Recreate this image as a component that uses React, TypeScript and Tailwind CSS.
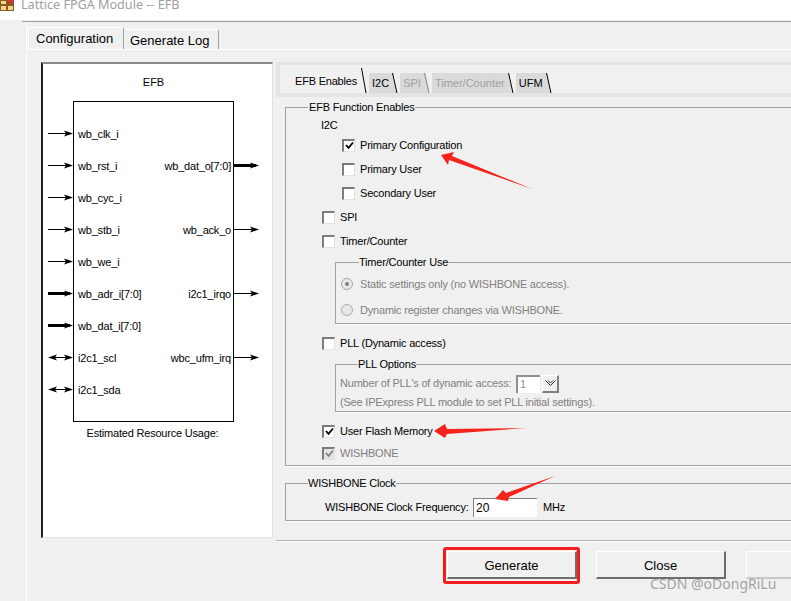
import type { ReactNode } from 'react';

const LEFT_PORTS = ['wb_clk_i', 'wb_rst_i', 'wb_cyc_i', 'wb_stb_i', 'wb_we_i', 'wb_adr_i[7:0]', 'wb_dat_i[7:0]', 'i2c1_scl', 'i2c1_sda'];
const LEFT_KINDS: ArrowKind[] = ['thin', 'thin', 'thin', 'thin', 'thin', 'thick', 'thick', 'both', 'both'];
const RIGHT_PORTS = ['', 'wb_dat_o[7:0]', '', 'wb_ack_o', '', 'i2c1_irqo', '', 'wbc_ufm_irq', ''];
const RIGHT_KINDS: (ArrowKind | null)[] = [null, 'thick', null, 'thin', null, 'thin', null, 'thin', null];

type ArrowKind = 'thin' | 'thick' | 'both';

function Arrow({ kind }: { kind: ArrowKind | null }) {
  return (
    <div className="h-[32px] flex items-center">
      {kind && (
        <svg width="25" height="9" viewBox="0 0 25 9" className="block">
          <line x1={kind === 'both' ? 2 : 0} y1="4.5" x2="22" y2="4.5" stroke="#000" strokeWidth={kind === 'thick' ? 3 : 1} />
          <path d="M16 1.5 L25 4.5 L16 7.5 L18 4.5 Z" fill="#000" />
          {kind === 'both' && <path d="M9 1.5 L0 4.5 L9 7.5 L7 4.5 Z" fill="#000" />}
        </svg>
      )}
    </div>
  );
}

function CheckBox({ checked, disabled }: { checked?: boolean; disabled?: boolean }) {
  return (
    <span
      className={`w-[13px] h-[13px] shrink-0 border-t-2 border-l-2 border-r border-b border-t-[#7c7c7c] border-l-[#7c7c7c] border-r-[#e2e2e2] border-b-[#e2e2e2] flex items-center justify-center ${
        disabled ? 'bg-[#e4e4e4]' : 'bg-white'
      }`}
    >
      {checked && (
        <svg width="9" height="9" viewBox="0 0 9 9" className="block">
          <path d="M1 4 L3.5 6.8 L8 1.5" fill="none" stroke={disabled ? '#808080' : '#000'} strokeWidth="1.8" />
        </svg>
      )}
    </span>
  );
}

function CheckRow({ label, indent, checked, disabled, height = 24 }: { label: string; indent: string; checked?: boolean; disabled?: boolean; height?: number }) {
  return (
    <div className={`flex items-center gap-[5px] ${indent} ${height === 24 ? 'h-[24px]' : 'h-[20px]'} ${disabled ? 'text-[#7f7f7f]' : ''}`}>
      <CheckBox checked={checked} disabled={disabled} />
      <span>{label}</span>
    </div>
  );
}

function Radio({ label, selected }: { label: string; selected?: boolean }) {
  return (
    <div className="h-[26px] flex items-center gap-[7px] pl-[5px] text-[#808080]">
      <svg width="12" height="12" viewBox="0 0 12 12" className="block">
        <circle cx="6" cy="6" r="5.5" fill="#e8e8e8" stroke="#a8a8a8" />
        {selected && <circle cx="6" cy="6" r="2" fill="#808080" />}
      </svg>
      <span>{label}</span>
    </div>
  );
}

function Group({ title, className, legendClass, children }: { title: string; className: string; legendClass: string; children: ReactNode }) {
  return (
    <fieldset className={`border border-r-0 border-[#a0a0a0] shadow-[0_1px_0_#fff] ${className}`}>
      <legend className={`h-[14px] leading-[14px] ${legendClass}`}>{title}</legend>
      {children}
    </fieldset>
  );
}

function SubTab({ label, active, muted, edge = '#000' }: { label: string; active?: boolean; muted?: boolean; edge?: string }) {
  return (
    <div className="flex items-end h-[25px]">
      <div className={`${active ? 'h-[25px] pr-[4px]' : 'h-[20px] bg-[#dadada] pl-[3px] pr-[3px] tracking-normal'} flex items-center pt-[1px] ${muted ? 'text-[#a0a0a0]' : ''}`}>
        {label}
      </div>
      <svg width="8" height="25" viewBox="0 0 8 25" className="block shrink-0">
        {!active && <polygon points="0,5 1,5 5,25 0,25" fill="#dadada" />}
        <line x1="0.5" y1={active ? 0 : 5} x2="5" y2="25" stroke={edge} />
      </svg>
    </div>
  );
}

function DlgButton({ label, disabled }: { label: string; disabled?: boolean }) {
  return (
    <button
      className={`w-[130px] h-[28px] pt-[1px] text-[13px] bg-[#f0f0f0] border-t border-l border-white border-r-2 border-b-2 ${
        disabled ? 'border-r-[#c8c8c8] border-b-[#c8c8c8]' : 'border-r-[#6e6e6e] border-b-[#6e6e6e]'
      }`}
    >
      {label}
    </button>
  );
}

export default function App() {
  return (
    <div className="relative w-[791px] h-[601px] overflow-hidden bg-[#f0f0f0] text-black text-[11px] tracking-[-0.2px] leading-none font-['Liberation_Sans',sans-serif]">
      {/* Title bar, cropped at the top of the shot */}
      <div className="h-[20px] bg-white flex items-start gap-[7px] overflow-hidden">
        <svg width="14" height="11" viewBox="0 0 14 11" className="block shrink-0">
          <rect x="0" y="-1" width="14" height="12" fill="#8a5a1e" />
          <rect x="1" y="1" width="5" height="3" fill="#f4d78a" />
          <rect x="1" y="6" width="5" height="4" fill="#f4d78a" />
          <rect x="8" y="6" width="5" height="4" fill="#f4d78a" />
          <rect x="8" y="0" width="6" height="3" fill="#c8383a" />
        </svg>
        <span className="-mt-[3px] text-[12.6px] tracking-normal leading-[16px] text-[#a0a0a0] font-['Noto_Sans',sans-serif]">Lattice FPGA Module -- EFB</span>
      </div>

      {/* Outer tab page */}
      <div className="ml-[22px] mt-[1px] border-t border-[#a0a0a0] h-[580px]">
        <div className="ml-[4px] h-full border-l border-white">
          <div className="h-[28px] flex items-end text-[13px] tracking-normal pl-[1px] border-b border-white pt-[6px]">
            <div className="h-[22px] w-[96px] border border-b-0 border-white border-r-[#a0a0a0] rounded-t-[2px] flex items-center pl-[7px]">Configuration</div>
            <div className="h-[20px] w-[95px] border-t border-r border-white border-r-[#a0a0a0] rounded-t-[2px] flex items-center pl-[6px] pt-[1px]">Generate Log</div>
          </div>

          <div className="flex pt-[12px]">
            {/* Block diagram */}
            <div className="ml-[14px] w-[232px] h-[476px] shrink-0 bg-white border-t-2 border-l-2 border-t-[#8a8a8a] border-l-[#202020] border-r border-b border-r-[#e2e2e2] border-b-[#e2e2e2]">
              <div className="h-[37px] pt-[12px] pr-[8px] text-center tracking-normal leading-[13px]">EFB</div>
              <div className="flex pl-[5px]">
                <div className="w-[25px] pt-[16px]">
                  {LEFT_KINDS.map((kind, i) => (
                    <Arrow key={i} kind={kind} />
                  ))}
                </div>
                <div className="w-[161px] h-[321px] border border-black py-[16px] flex justify-between pl-[4px] pr-[2px]">
                  <div>
                    {LEFT_PORTS.map((name) => (
                      <div key={name} className="h-[32px] flex items-center">
                        {name}
                      </div>
                    ))}
                  </div>
                  <div className="text-right">
                    {RIGHT_PORTS.map((name, i) => (
                      <div key={i} className="h-[32px] flex items-center justify-end">
                        {name}
                      </div>
                    ))}
                  </div>
                </div>
                <div className="w-[25px] pt-[16px]">
                  {RIGHT_KINDS.map((kind, i) => (
                    <Arrow key={i} kind={kind} />
                  ))}
                </div>
              </div>
              <div className="pt-[6px] pr-[10px] text-center">Estimated Resource Usage:</div>
            </div>

            {/* Settings */}
            <div className="ml-[3px] flex-1 min-w-0">
              <div className="h-[35px] bg-[#e4e4e4] pl-[4px] pt-[3px]">
                <div className="h-[28px] bg-[#f0f0f0] pl-[15px] flex items-end">
                  <SubTab label="EFB Enables" active />
                  <SubTab label="I2C" />
                  <SubTab label="SPI" muted edge="#808080" />
                  <SubTab label="Timer/Counter" muted />
                  <SubTab label="UFM" />
                </div>
              </div>

              <div className="pl-[9px] pt-[3px] w-[600px]">
                <Group title="EFB Function Enables" className="h-[366px]" legendClass="ml-[22px] px-[1px]">
                  <div className="pt-[4px] pl-[35px] h-[19px] leading-[14px]">I2C</div>
                  <CheckRow label="Primary Configuration" indent="pl-[56px]" checked />
                  <CheckRow label="Primary User" indent="pl-[56px]" />
                  <CheckRow label="Secondary User" indent="pl-[56px]" />
                  <CheckRow label="SPI" indent="pl-[36px]" />
                  <CheckRow label="Timer/Counter" indent="pl-[36px]" />
                  <div className="pl-[49px] mt-[2px]">
                    <Group title="Timer/Counter Use" className="h-[69px]" legendClass="ml-[23px]">
                      <div className="pt-[2px]">
                        <Radio label="Static settings only (no WISHBONE access)." selected />
                        <Radio label="Dynamic register changes via WISHBONE." />
                      </div>
                    </Group>
                  </div>
                  <div className="mt-[7px]">
                    <CheckRow label="PLL (Dynamic access)" indent="pl-[36px]" />
                  </div>
                  <div className="pl-[49px] mt-[2px]">
                    <Group title="PLL Options" className="h-[55px]" legendClass="ml-[22px]">
                      <div className="pt-[1px] pl-[4px]">
                        <div className="h-[23px] flex items-center text-[#808080]">
                          <span className="w-[176px]">Number of PLL's of dynamic access:</span>
                          <span className="w-[24px] h-[18px] bg-white border-t-2 border-l-2 border-t-[#909090] border-l-[#909090] pl-[2px] flex items-center text-[#909090]">1</span>
                          <span className="ml-[2px] w-[17px] h-[18px] bg-[#f0f0f0] border-t border-l border-white border-r-2 border-b-2 border-r-[#808080] border-b-[#808080] flex items-center justify-center">
                            <svg width="11" height="6" viewBox="0 0 11 6" className="block">
                              <path d="M0.5 0.5 L5.5 5.5 L10.5 0.5 M3 0.5 L5.5 3 L8 0.5" fill="none" stroke="#303030" />
                            </svg>
                          </span>
                        </div>
                        <div className="h-[15px] flex items-center text-[#808080]">(See IPExpress PLL module to set PLL initial settings).</div>
                      </div>
                    </Group>
                  </div>
                  <div className="mt-[7px]">
                    <CheckRow label="User Flash Memory" indent="pl-[36px]" checked />
                    <CheckRow label="WISHBONE" indent="pl-[36px]" checked disabled height={20} />
                  </div>
                </Group>

                <Group title="WISHBONE Clock" className="mt-[10px] h-[45px]" legendClass="ml-[22px]">
                  <div className="h-[30px] pt-[4px] pl-[39px] flex items-center">
                    <span className="w-[148px]">WISHBONE Clock Frequency:</span>
                    <span className="w-[64px] h-[19px] bg-white border-t border-l border-t-[#808080] border-l-[#808080] pl-[2px] flex items-center text-[12px] tracking-normal">20</span>
                    <span className="ml-[6px]">MHz</span>
                  </div>
                </Group>
              </div>

              <div className="mt-[19px] border-t border-[#b4b4b4] shadow-[0_1px_0_#fff]" />
              <div className="pl-[167px] pt-[6px] flex items-start tracking-normal">
                <div className="w-[137px] h-[37px] border-[3px] border-[#f01e1e] rounded-[3px] pl-[1px] pt-[1px]">
                  <DlgButton label="Generate" />
                </div>
                <div className="ml-[16px] mt-[4px]">
                  <DlgButton label="Close" />
                </div>
                <div className="ml-[20px] mt-[4px]">
                  <DlgButton label="" disabled />
                </div>
              </div>
            </div>
          </div>
        </div>
      </div>

      {/* Red annotation arrows */}
      <svg width="791" height="601" viewBox="0 0 791 601" className="absolute inset-0 pointer-events-none">
        <polygon points="441,155 454,152 452,156 532,189 449,160 448,165" fill="#f5231c" />
        <polygon points="434,431 445,424 447,429 526,428 447,434 445,438" fill="#f5231c" />
        <polygon points="495,499 503,490 506,493 555,476 509,497 508,501" fill="#f5231c" />
      </svg>

      {/* Watermark */}
      <div className="absolute left-[650px] top-[576px] text-[14px] tracking-normal leading-[16px] text-[#8c8c8c]/80 font-['Noto_Sans',sans-serif]">CSDN @oDongRiLu</div>
    </div>
  );
}
